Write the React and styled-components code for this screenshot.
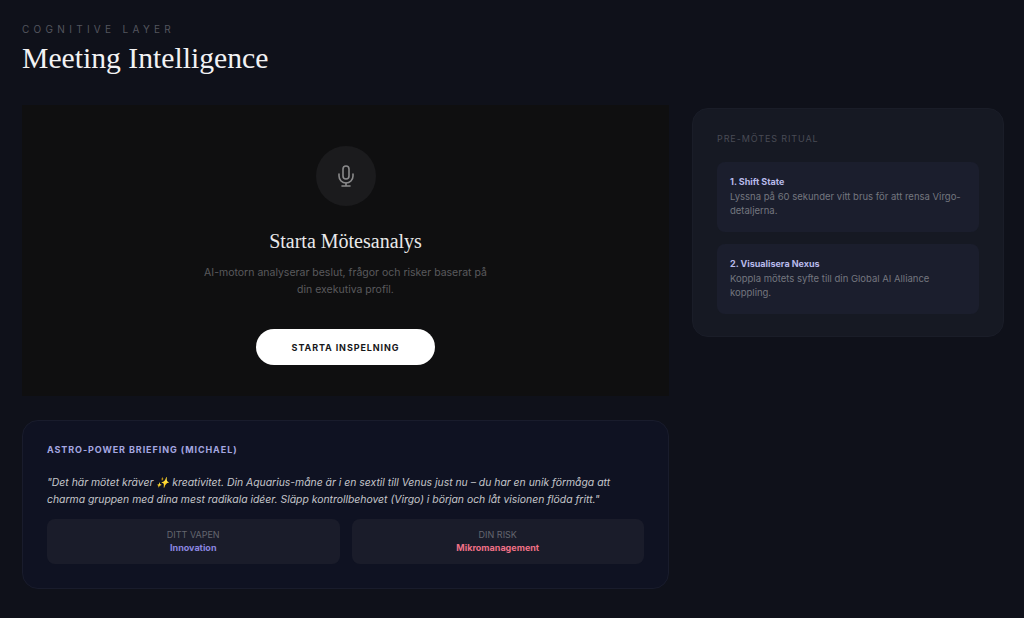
import React from 'react';
import styled, { createGlobalStyle } from 'styled-components';

const Global = createGlobalStyle`
  html, body { margin: 0; padding: 0; background: #0f111a; }
  body { font-family: Inter, "Liberation Sans", sans-serif; overflow: hidden; }
  * { box-sizing: border-box; }
`;
const Page = styled.div`
  width: 1024px; height: 618px; padding: 22px 20px 0 22px;
  background: #0f111a; overflow: hidden;
`;
const Eyebrow = styled.div`
  font-size: 10px; line-height: 14px; letter-spacing: 4.3px; color: #53555e; text-transform: uppercase;
`;
const Title = styled.h1`
  margin: 4px 0 0; font-family: "Liberation Serif", serif; font-weight: 400;
  font-size: 29.7px; line-height: 36px; color: #f2f2f3;
`;
const Columns = styled.div`
  display: grid; grid-template-columns: 647px 312px; gap: 23px; margin-top: 29px; align-items: start;
`;
const LeftColumn = styled.div`display: flex; flex-direction: column; gap: 24px;`;
const Hero = styled.section`
  height: 291px; padding-top: 41px; background: #0f0f10;
  display: flex; flex-direction: column; align-items: center;
`;
const MicCircle = styled.div`
  width: 60px; height: 60px; border-radius: 50%; background: #1b1b1d;
  display: flex; align-items: center; justify-content: center; color: #8a8a8b;
`;
const HeroTitle = styled.h2`
  margin: 23px 0 0; font-family: "Liberation Serif", serif; font-weight: 400;
  font-size: 20px; line-height: 24px; color: #e9e9ea;
`;
const HeroText = styled.p`
  margin: 11px 0 0; width: 300px; text-align: center; font-size: 10.5px; line-height: 17px; color: #5a5a5d;
`;
const StartButton = styled.button`
  margin-top: 31px; width: 179px; height: 36px; border: 0; border-radius: 18px; background: #fff;
  color: #17171a; font: 700 9px Inter, sans-serif; letter-spacing: 0.9px; text-transform: uppercase;
`;
const Briefing = styled.section`
  height: 169px; padding: 23px 24px; border-radius: 16px; border: 1px solid #191c2c; background: #0f1222;
`;
const BriefingTitle = styled.h3`
  margin: 0; font-size: 9px; line-height: 12px; font-weight: 700; letter-spacing: 0.92px; color: #a5a7e0; text-transform: uppercase;
`;
const Quote = styled.p`
  margin: 18px 0 0; font-size: 10.4px; line-height: 17px; font-style: italic; color: #c5c6ca; white-space: nowrap;
`;
const StatGrid = styled.div`display: grid; grid-template-columns: 1fr 1fr; gap: 12px; margin-top: 11px;`;
const Stat = styled.div`
  height: 45px; border-radius: 8px; background: #1a1c2a; padding-top: 10px;
  display: flex; flex-direction: column; align-items: center;
`;
const StatLabel = styled.span`font-size: 9px; line-height: 12px; color: #64666f; text-transform: uppercase;`;
const StatValue = styled.span`font-size: 9px; line-height: 13px; font-weight: 700; color: ${p => p.$color};`;
const Ritual = styled.aside`
  height: 229px; margin-top: 3px; padding: 23px 24px; border-radius: 16px; background: #161923; border: 1px solid #1a1d28;
`;
const RitualTitle = styled.h3`
  margin: 0; font-size: 9px; line-height: 14px; font-weight: 400; letter-spacing: 0.9px; color: #494b55; text-transform: uppercase;
`;
const Steps = styled.div`display: flex; flex-direction: column; gap: 12px; margin-top: 16px;`;
const Step = styled.div`
  height: 70px; padding: 11px 13px; border-radius: 8px; background: #1b1e2d;
`;
const StepTitle = styled.div`font-size: 9px; line-height: 17px; font-weight: 700; color: #b8baea;`;
const StepText = styled.div`font-size: 9.5px; line-height: 14px; color: #74767f;`;

export default function App() {
  return (
    <Page>
      <Global />
      <Eyebrow>Cognitive Layer</Eyebrow>
      <Title>Meeting Intelligence</Title>
      <Columns>
        <LeftColumn>
          <Hero>
            <MicCircle>
              <svg width="24" height="24" viewBox="0 0 24 24" fill="none" stroke="currentColor" strokeWidth="1.6" strokeLinecap="round" strokeLinejoin="round">
                <path d="M12 2a3 3 0 0 0-3 3v7a3 3 0 0 0 6 0V5a3 3 0 0 0-3-3Z" />
                <path d="M19 10v2a7 7 0 0 1-14 0v-2" />
                <path d="M12 19v3M8 22h8" />
              </svg>
            </MicCircle>
            <HeroTitle>Starta Mötesanalys</HeroTitle>
            <HeroText>AI-motorn analyserar beslut, frågor och risker baserat på din exekutiva profil.</HeroText>
            <StartButton>Starta Inspelning</StartButton>
          </Hero>
          <Briefing>
            <BriefingTitle>Astro-Power Briefing (Michael)</BriefingTitle>
            <Quote>
              "Det här mötet kräver ✨ kreativitet. Din Aquarius-måne är i en sextil till Venus just nu – du har en unik förmåga att<br />
              charma gruppen med dina mest radikala idéer. Släpp kontrollbehovet (Virgo) i början och låt visionen flöda fritt."
            </Quote>
            <StatGrid>
              <Stat><StatLabel>Ditt Vapen</StatLabel><StatValue $color="#8b86e0">Innovation</StatValue></Stat>
              <Stat><StatLabel>Din Risk</StatLabel><StatValue $color="#ef7086">Mikromanagement</StatValue></Stat>
            </StatGrid>
          </Briefing>
        </LeftColumn>
        <Ritual>
          <RitualTitle>Pre-Mötes Ritual</RitualTitle>
          <Steps>
            <Step>
              <StepTitle>1. Shift State</StepTitle>
              <StepText>Lyssna på 60 sekunder vitt brus för att rensa Virgo-detaljerna.</StepText>
            </Step>
            <Step>
              <StepTitle>2. Visualisera Nexus</StepTitle>
              <StepText>Koppla mötets syfte till din Global AI Alliance koppling.</StepText>
            </Step>
          </Steps>
        </Ritual>
      </Columns>
    </Page>
  );
}
